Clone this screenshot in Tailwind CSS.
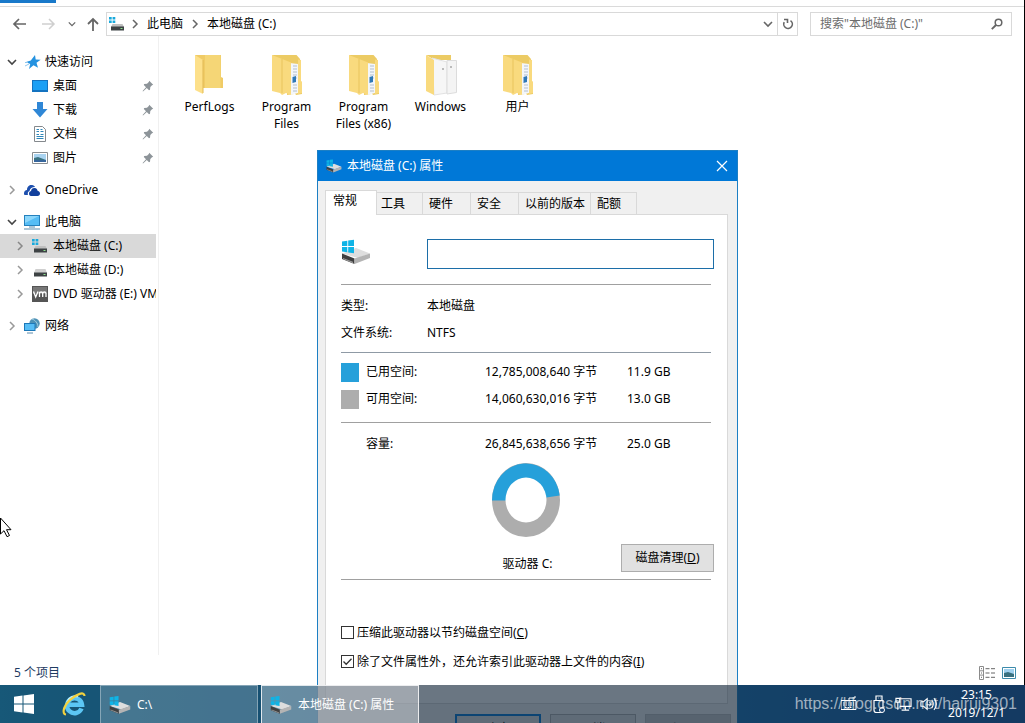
<!DOCTYPE html>
<html lang="zh-CN">
<head>
<meta charset="utf-8">
<title>本地磁盘 (C:)</title>
<script src="https://cdn.jsdelivr.net/npm/@tailwindcss/browser@4"></script>
</head>
<body class="relative flex h-screen flex-col overflow-hidden bg-linear-to-r from-[#20ade3] to-[#165ca8] font-['Noto_Sans','Noto_Sans_CJK_SC',sans-serif] text-[12px] leading-4 text-black">

<svg class="hidden" aria-hidden="true">
  <symbol id="drive" viewBox="0 0 30 26">
    <path d="M1 14.500 15 9l14 5.500-12 4.500z" fill="#dedede"/>
    <path d="M1 14.500 13.500 19.500V25L1 20z" fill="#3f3f3f"/>
    <path d="M13.500 19.500 29 14.500V19l-15.500 6z" fill="#b4b4b4"/>
    <path d="M2 19l10 3.800v1.500L2 20z" fill="#9a9a9a"/>
    <path d="M1 2.500 6.300 1.700V7H1zM7.200 1.500 13 .8V7H7.200zM1 8h5.300v5.300L1 12.600zM7.200 8H13v6.200l-5.800-.8z" fill="#0fb4e6"/>
  </symbol>
  <symbol id="flatdrive" viewBox="0 0 16 16">
    <path d="M3.500 7h10L15 11H2z" fill="#cfcfcf"/>
    <path d="M2 10.500h13v4H2z" fill="#3d4244"/>
    <path d="M11.500 12h2v1h-2z" fill="#8fe38f"/>
  </symbol>
  <symbol id="flatwindrive" viewBox="0 0 16 16">
    <path d="M0 1h2.700v2.500H0zM3.600 1h2.700v2.500H3.600zM0 4.500h2.700V7H0zM3.600 4.500h2.700V7H3.600z" fill="#18a9dc"/>
    <path d="M3.500 8h10L15 11H2z" fill="#bfbfbf"/>
    <path d="M2 10.500h13v4H2z" fill="#3d4244"/>
    <path d="M11.500 12h2v1h-2z" fill="#8fe38f"/>
  </symbol>
  <symbol id="right" viewBox="0 0 8 10"><path d="M2 1l4 4-4 4" fill="none" stroke="currentColor" stroke-width="1.5"/></symbol>
  <symbol id="down" viewBox="0 0 10 8"><path d="M1 2l4 4 4-4" fill="none" stroke="currentColor" stroke-width="1.6"/></symbol>
  <symbol id="pin" viewBox="0 0 12 12"><path d="M7.2.8 11.2 4.8 10 5.2 8.3 7 8 9.8 7 10.2 4.8 8 1 11.4.6 11 4 7.200 1.800 5 2.200 4 5 3.700 6.800 2z" fill="#8d9499"/></symbol>
  <symbol id="folderfull" viewBox="0 0 32 42">
    <path d="M1 1h24.500L29 5v22l2 1v12l-6 1z" fill="#eccb64"/>
    <path d="M16 6 23 8.500V40l-7 1z" fill="#f0cb62"/>
    <path d="M19 9l8 1v29l-8 2z" fill="#f3f6fa"/>
    <path d="M22 12h4M22 15h4M22 18h4M22 21h4M22 24h4M22 31h4M22 34h4M22 37h4" stroke="#b4bfcc" stroke-width="1"/>
    <path d="M21.500 23l3.500-1v6l-3.500 1z" fill="#2f78b7"/>
    <path d="M1 1 20 8.500V41L15 39 11 41 9 39 1 37z" fill="#f9da7e"/>
    <path d="M11 5v34" stroke="#e9c45c" stroke-width="1"/>
    <path d="M27 5.500 30 6v21l1 1v11l-4 1z" fill="#f9da7e"/>
  </symbol>
</svg>

<!-- Explorer window -->
<div class="flex min-h-0 flex-1 flex-col border-r border-black bg-white">
  <div class="h-[7px] border-b border-[#dadada]"><div class="h-[3px] w-14 bg-[#1979ca]"></div></div>

  <header class="flex items-center pt-[5px] pr-3">
    <nav class="flex w-[106px] shrink-0 items-center pl-3 text-[#666]">
      <button aria-label="后退"><svg class="block h-3.5 w-3.5" viewBox="0 0 14 14"><path d="M7 2 2 7l5 5M2 7h12" fill="none" stroke="currentColor" stroke-width="1.7"/></svg></button>
      <button aria-label="前进" class="ml-4 text-[#cfcfcf]"><svg class="block h-3.5 w-3.5" viewBox="0 0 14 14"><path d="M7 2l5 5-5 5M12 7H0" fill="none" stroke="currentColor" stroke-width="1.5"/></svg></button>
      <button aria-label="最近浏览的位置" class="ml-3"><svg class="block h-2 w-2"><use href="#down"/></svg></button>
      <button aria-label="上移" class="ml-2.5"><svg class="block h-3.5 w-3.5" viewBox="0 0 14 14"><path d="M2 7l5-5 5 5M7 2v12" fill="none" stroke="currentColor" stroke-width="1.8"/></svg></button>
    </nav>
    <div class="flex h-6 min-w-0 flex-1 items-center border border-[#d9d9d9]">
      <svg class="mr-1 ml-0.5 h-4 w-4"><use href="#flatwindrive"/></svg>
      <svg class="mx-0.5 h-2.5 w-2 text-[#666]"><use href="#right"/></svg>
      <button class="mr-1.5 ml-1.5">此电脑</button>
      <svg class="mx-0.5 h-2.5 w-2 text-[#666]"><use href="#right"/></svg>
      <button class="ml-1.5">本地磁盘 (C:)</button>
      <button aria-label="以前的位置" class="ml-auto px-1 text-[#666]"><svg class="h-2.5 w-2.5"><use href="#down"/></svg></button>
      <button aria-label="刷新" class="flex h-full w-5 items-center justify-center border-l border-[#d9d9d9] text-[#666]"><svg class="h-3 w-3" viewBox="0 0 12 12"><path d="M2.200 4.200A4.300 4.300 0 1 0 8.500 2.600M2 1.500h3.500V5" fill="none" stroke="currentColor" stroke-width="1.600"/></svg></button>
    </div>
    <label class="ml-3 flex h-6 w-[202px] shrink-0 items-center border border-[#d9d9d9] pr-2 pl-[9px]">
      <input type="text" aria-label="搜索" placeholder='搜索"本地磁盘 (C:)"' class="min-w-0 flex-1 outline-none placeholder:text-[#6d6d6d]">
      <svg class="h-3 w-3 text-[#666]" viewBox="0 0 12 12"><circle cx="7.500" cy="4.500" r="3.300" fill="none" stroke="currentColor" stroke-width="1.500"/><path d="M5 7 .800 11.200" stroke="currentColor" stroke-width="1.900"/></svg>
    </label>
  </header>

  <div class="flex min-h-0 flex-1">
    <aside class="w-[159px] shrink-0 overflow-hidden border-r border-[#f0f0f0] pt-3.5 pr-0.5 whitespace-nowrap">
      <div class="flex h-6 items-center pl-[7px]"><svg class="mr-2 h-2.5 w-2.5 text-[#444]"><use href="#down"/></svg>
        <svg class="mr-1 h-4 w-4" viewBox="0 0 16 16"><path d="M10 1l.7 4.500 5 .300-4.200 3 1.500 5-4.500-2.600L4 15l1.200-5L1 8l4.800-1.500z" fill="#2492e0"/><path d="M0 12l4-2M0 8.500h3" stroke="#8fc6ee"/></svg><a href="#">快速访问</a></div>
      <div class="flex h-6 items-center pr-0.5 pl-8"><svg class="mr-[5px] h-4 w-4" viewBox="0 0 16 16"><path d="M0 2h16v12H0z" fill="#1473c0"/><path d="M1 3h14v9H1z" fill="#1ba0f5"/></svg><a href="#">桌面</a><svg class="ml-auto h-3 w-3"><use href="#pin"/></svg></div>
      <div class="flex h-6 items-center pr-0.5 pl-8"><svg class="mr-[5px] h-4 w-4" viewBox="0 0 16 16"><path d="M5 0h6v7h4.500L8 15.500.500 7H5z" fill="#2f87d6"/></svg><a href="#">下载</a><svg class="ml-auto h-3 w-3"><use href="#pin"/></svg></div>
      <div class="flex h-6 items-center pr-0.5 pl-8"><svg class="mr-[5px] h-4 w-4" viewBox="0 0 16 16"><path d="M2.500.500h8l3 3v12h-11z" fill="#fff" stroke="#84898d"/><path d="M4.500 3.500H7M8.500 3.500h2M4.500 5.500H7M8.500 5.500h3M4.500 8.500H7M8.500 8.500h3M4.500 10.500h7M4.500 12.500h7" stroke="#3087b9"/></svg><a href="#">文档</a><svg class="ml-auto h-3 w-3"><use href="#pin"/></svg></div>
      <div class="flex h-6 items-center pr-0.5 pl-8"><svg class="mr-[5px] h-4 w-4" viewBox="0 0 16 16"><path d="M.500 2.500h15v11H.500z" fill="#fff" stroke="#898d90"/><path d="M2 4h12v8H2z" fill="#a9d3f0"/><path d="M2 8l4-1 8 3v2H2z" fill="#3a7280"/><path d="M2 10h12v2H2z" fill="#36669c"/></svg><a href="#">图片</a><svg class="ml-auto h-3 w-3"><use href="#pin"/></svg></div>

      <div class="mt-2 flex h-6 items-center pl-2"><svg class="mr-2 h-2.5 w-2 text-[#999]"><use href="#right"/></svg>
        <svg class="mr-[5px] h-4 w-4" viewBox="0 0 16 16"><path d="M0 12c-.200-3 1.500-4 3-4C3 4 6 2.500 8 3c1.500.300 2.500 1 3 2-3 0-5 1.500-5.500 4C3.800 9.500 3.500 11.500 4 13H2C1 13 0 13 0 12z" fill="#1d4fae"/><path d="M5 11.500C5 9.800 6 9.300 7 9.300 7 7 9 5.800 10.500 6c2 0 3 1.500 3.200 3C15.500 9.300 16 10.300 16 11.500S15 14 13.500 14H7c-1.300 0-2-1.200-2-2.500z" fill="#12409d"/></svg><a href="#">OneDrive</a></div>

      <div class="mt-2 flex h-6 items-center pl-[7px]"><svg class="mr-[7px] h-2.5 w-2.5 text-[#444]"><use href="#down"/></svg>
        <svg class="mr-[5px] h-4 w-4" viewBox="0 0 16 16"><path d="M0 1h16v11H0z" fill="#2581bd"/><path d="M1 2h14v9H1z" fill="#56bdf5"/><path d="M1 2h14L1 9z" fill="#8ad6fb"/><path d="M5 13h6M0 15h16" stroke="#5a8cad"/></svg><a href="#">此电脑</a></div>
      <div class="flex h-6 items-center bg-[#d9d9d9] pl-4"><svg class="mr-2 h-2.5 w-2 text-[#888]"><use href="#right"/></svg><svg class="mr-[5px] h-4 w-4"><use href="#flatwindrive"/></svg><a href="#">本地磁盘 (C:)</a></div>
      <div class="flex h-6 items-center pl-4"><svg class="mr-2 h-2.5 w-2 text-[#999]"><use href="#right"/></svg><svg class="mr-[5px] h-4 w-4"><use href="#flatdrive"/></svg><a href="#">本地磁盘 (D:)</a></div>
      <div class="flex h-6 items-center overflow-hidden pl-4"><svg class="mr-2 h-2.5 w-2 shrink-0 text-[#999]"><use href="#right"/></svg>
        <svg class="mr-[5px] h-4 w-4 shrink-0" viewBox="0 0 16 16"><path d="M0 0h16v16H0z" fill="#555"/><path d="M1 1h14v7H1z" fill="#777"/><path d="M1.500 5.500 3.700 11 6 5.500M7.500 11V5.800M7.500 7.500c0-2 3.200-2 3.200 0V11M10.700 7.500c0-2 3.300-2 3.300 0V11" fill="none" stroke="#fff" stroke-width="1.300"/></svg><a href="#">DVD 驱动器 (E:) VMware Tools</a></div>

      <div class="mt-2 flex h-6 items-center pl-2"><svg class="mr-2 h-2.5 w-2 text-[#999]"><use href="#right"/></svg>
        <svg class="mr-[5px] h-4 w-4" viewBox="0 0 16 16"><circle cx="10.500" cy="5.500" r="5.200" fill="#4d91b5"/><path d="M8 1c3 1 6 4 6 8" fill="none" stroke="#a3cfe2"/><path d="M0 5h11.500v8H0z" fill="#1c78b8"/><path d="M1 6h9.500v6H1z" fill="#56bdf5"/><path d="M3 15h6" stroke="#5a8cad"/></svg><a href="#">网络</a></div>
    </aside>

    <main class="flex flex-1 items-start pt-[18px] pl-3 text-center leading-[17px]">
      <a href="#" class="flex w-[77px] flex-col items-center"><svg class="mb-0.5 h-[42px] w-8" viewBox="0 0 32 42"><path d="M1 1h26v22l2 1v10H8z" fill="#f0cb66"/><path d="M11 1h15.500v33H11z" fill="#f5d676"/><path d="M1 1 9 6v34L1 36z" fill="#fde08a"/><path d="M9 6v33" stroke="#e0b952"/></svg>PerfLogs</a>
      <a href="#" class="flex w-[77px] flex-col items-center"><svg class="mb-0.5 h-[42px] w-8"><use href="#folderfull"/></svg><span>Program<br>Files</span></a>
      <a href="#" class="flex w-[77px] flex-col items-center"><svg class="mb-0.5 h-[42px] w-8"><use href="#folderfull"/></svg><span>Program<br>Files (x86)</span></a>
      <a href="#" class="flex w-[77px] flex-col items-center"><svg class="mb-0.5 h-[42px] w-8" viewBox="0 0 32 42"><path d="M1 1h25v5H10z" fill="#eccb64"/><path d="M7 4l15 4v31l-13 2z" fill="#f6f6f6" stroke="#e2e2e2"/><path d="M22 6.500h9.500v32L22 40z" fill="#f4f4f4" stroke="#dcdcdc"/><path d="M17 14h2v2h-2zM25 12h2v2h-2z" fill="#bbb"/><path d="M1 1 9 6v35L1 37z" fill="#f9da7e"/></svg>Windows</a>
      <a href="#" class="flex w-[77px] flex-col items-center"><svg class="mb-0.5 h-[42px] w-8"><use href="#folderfull"/></svg>用户</a>
    </main>
  </div>

  <footer class="flex h-[30px] items-center pt-1.5 pr-2 pl-3.5 text-[#1e3b62]">
    <span>5 个项目</span>
    <button aria-label="详细信息" class="ml-auto"><svg class="block h-3.5 w-4" viewBox="0 0 16 14"><path d="M.500.500h4v13h-4zM.500 4.800h4M.500 9.100h4" fill="none" stroke="#8b8b8b"/><path d="M2 2.700h1M2 7h1M2 11.300h1M6.500 2.700h4M12 2.700h4M6.500 7h4M12 7h4M6.500 11.300h4M12 11.300h4" stroke="#666"/></svg></button>
    <button aria-label="大图标" class="ml-[7px]"><svg class="block h-3.5 w-3.5" viewBox="0 0 14 14"><path d="M.500 1.500h13v11H.500z" fill="#fff" stroke="#3d8bab"/><path d="M2 3h10v8H2z" fill="#9fd0ee"/><path d="M2 7l4-1 6 2v3H2z" fill="#39707f"/></svg></button>
  </footer>
</div>

<!-- Properties dialog, partly behind the taskbar -->
<section role="dialog" aria-label="本地磁盘 (C:) 属性" class="absolute top-[150px] left-[317px] z-10 w-[421px] border border-[#1c7fc4] bg-[#f0f0f0] pb-3">
  <div class="flex h-[30px] items-center bg-[#0078d7] pr-2 pl-2 text-white">
    <svg class="mr-[5px] h-4 w-4"><use href="#drive"/></svg>
    <h1>本地磁盘 (C:) 属性</h1>
    <button aria-label="关闭" class="ml-auto"><svg class="block h-3.5 w-3.5" viewBox="0 0 14 14"><path d="M2 2l10 10M12 2 2 12" stroke="#fff" stroke-width="1.200"/></svg></button>
  </div>

  <div class="mr-[9px] ml-[7px] pt-[9px]">
    <div role="tablist" class="flex items-end">
      <button role="tab" aria-selected="true" class="-mb-px h-[25px] w-[52px] border border-b-0 border-[#d9d9d9] bg-white pb-1 pl-[7px] text-left">常规</button>
      <button role="tab" class="h-[22px] w-[46px] border-t border-r border-[#d9d9d9] pl-1 text-left">工具</button>
      <button role="tab" class="h-[22px] w-12 border-t border-r border-[#d9d9d9] pl-1.5 text-left">硬件</button>
      <button role="tab" class="h-[22px] w-12 border-t border-r border-[#d9d9d9] pl-1.5 text-left">安全</button>
      <button role="tab" class="h-[22px] w-[72px] border-t border-r border-[#d9d9d9] pl-1.5 text-left">以前的版本</button>
      <button role="tab" class="h-[22px] w-[46px] border-t border-r border-[#d9d9d9] pl-1.5 text-left">配额</button>
    </div>

    <div role="tabpanel" class="border border-[#d9d9d9] bg-white pt-6 pr-[13px] pb-[27px] pl-[15px]">
      <div class="flex items-center">
        <svg class="mr-14 mb-1 h-[26px] w-[30px] shrink-0"><use href="#drive"/></svg>
        <input type="text" aria-label="卷标" class="h-[30px] min-w-0 flex-1 border border-[#1c6ea8] bg-white px-1 outline-none">
      </div>
      <hr class="mt-[15px] mr-[3px] border-[#a0a0a0]">
      <dl class="mt-[7px] grid grid-cols-[86px_1fr] leading-[27px]">
        <dt>类型:</dt><dd>本地磁盘</dd>
        <dt>文件系统:</dt><dd>NTFS</dd>
      </dl>
      <hr class="mt-1.5 mr-[3px] border-[#8f9aa5]">
      <table class="mt-[5px] w-full table-fixed text-left leading-[27px]">
        <tr><th class="w-[144px] font-normal"><span class="mr-[7px] inline-block h-[19px] w-[18px] bg-[#26a0da] align-middle"></span>已用空间:</th><td class="w-[142px]">12,785,008,640 字节</td><td>11.9 GB</td></tr>
        <tr><th class="font-normal"><span class="mr-[7px] inline-block h-[19px] w-[18px] bg-[#adadad] align-middle"></span>可用空间:</th><td>14,060,630,016 字节</td><td>13.0 GB</td></tr>
      </table>
      <hr class="mt-2.5 mr-[3px] border-[#a0a0a0]">
      <table class="mt-[7px] w-full table-fixed text-left leading-[27px]">
        <tr><th class="w-[144px] pl-[25px] font-normal">容量:</th><td class="w-[142px]">26,845,638,656 字节</td><td>25.0 GB</td></tr>
      </table>
      <div class="mt-1.5 mr-[3px] flex justify-center">
        <svg class="h-[74px] w-[68px]" viewBox="0 0 68 74" role="img" aria-label="已用 48%">
          <ellipse cx="34" cy="37" rx="34" ry="37" fill="#adadad"/>
          <path d="M0 37.500A34 37 0 0 1 67.700 32.500L34 37.500z" fill="#26a0da"/>
          <ellipse cx="34" cy="37" rx="20.500" ry="22.500" fill="#fff"/>
        </svg>
      </div>
      <div class="mt-[7px] grid grid-cols-[1fr_auto_1fr] items-end">
        <span class="col-start-2">驱动器 C:</span>
        <button class="h-7 w-[93px] justify-self-end border border-[#adadad] bg-[#e1e1e1]">磁盘清理(<u>D</u>)</button>
      </div>
      <hr class="mt-[7px] mr-[3px] border-[#a0a0a0]">
      <div class="mt-[38px]">
        <label class="flex h-[29px] items-center"><input type="checkbox" class="mr-[3px] h-[13px] w-[13px] appearance-none border border-[#333] bg-white">压缩此驱动器以节约磁盘空间(<u>C</u>)</label>
        <label class="relative flex h-[29px] items-center"><input type="checkbox" checked class="peer mr-[3px] h-[13px] w-[13px] appearance-none border border-[#333] bg-white"><svg class="pointer-events-none absolute top-2 left-0 hidden h-[13px] w-[13px] peer-checked:block" viewBox="0 0 13 13"><path d="M2.500 6.500 5.200 9.300 10.500 3.800" fill="none" stroke="#333" stroke-width="1.300"/></svg>除了文件属性外，还允许索引此驱动器上文件的内容(<u>I</u>)</label>
      </div>
    </div>
  </div>
  <div class="mt-2.5 flex justify-end gap-[9px] pr-1.5">
    <button class="h-[29px] w-[86px] border-2 border-[#0078d7] bg-[#e1e1e1]">确定</button>
    <button class="h-[29px] w-[86px] border border-[#adadad] bg-[#e1e1e1]">取消</button>
    <button disabled class="h-[29px] w-[86px] border border-[#bfbfbf] bg-[#cccccc] text-[#838383]">应用(<u>A</u>)</button>
  </div>
</section>

<!-- Taskbar -->
<div class="relative z-20 flex h-[38px] shrink-0 items-center bg-[#132639]/63 text-white">
  <button aria-label="开始" class="flex w-12 justify-center"><svg class="h-5 w-5" viewBox="0 0 20 20"><path d="M0 2.800 8.500 1.600V9.500H0zM9.500 1.500 20 0v9.500H9.500zM0 10.500h8.500v8L0 17.300zM9.500 10.500H20V20L9.500 18.600z" fill="#fff"/></svg></button>
  <button aria-label="Internet Explorer" class="mr-px flex w-[51px] justify-center"><svg class="h-6 w-6" viewBox="0 0 24 24"><path d="M19.500 16.500A7.500 7.500 0 1 1 20 12.800H7" fill="none" stroke="#5cc6f4" stroke-width="4.500"/><path d="M5 10C7 5 12 3.500 16 4.500" fill="none" stroke="#b9ecfb" stroke-width="2"/><path d="M4 22.500C-.500 22 1.500 14 8 8S22.500-1 22.500 4" fill="none" stroke="#f3d23e" stroke-width="2.200"/></svg></button>
  <button class="mr-[3px] flex h-full w-[158px] items-center border border-b-0 border-white/35 bg-white/20 pl-2"><svg class="mr-1.5 h-5 w-[22px]"><use href="#drive"/></svg>C:\</button>
  <button class="flex h-full w-[158px] items-center border border-b-0 border-white/80 bg-white/35 pl-2"><svg class="mr-1.5 h-5 w-[22px]"><use href="#drive"/></svg>本地磁盘 (C:) 属性</button>
  <div class="ml-auto flex items-center pr-5">
    <svg class="mr-4 h-4 w-4" viewBox="0 0 16 16"><path d="M0 4.500h15v9H0zM8 4.500V2h6V0" fill="none" stroke="#fff"/><path d="M2 7h11M2 9h11M4 11.500h7" stroke="#fff" stroke-dasharray="1.500 1"/></svg>
    <svg class="mr-2.5 h-5 w-3" viewBox="0 0 12 20"><path d="M3 6.500V2h6v4.500M1 6.500h9V16c0 2-1 2.500-2.500 2.500h-4C2 18.500 1 18 1 16zM5 4h.500M7 4h.500" fill="none" stroke="#fff" stroke-width="1.200"/><circle cx="9" cy="16" r="2.500" fill="#174273" stroke="#fff"/></svg>
    <svg class="mr-2 h-4 w-[17px]" viewBox="0 0 18 16"><path d="M5 2.500h12v8H5M11 10.500V14M7 14.500h8M1 2h4v4H1zM3 6v8" fill="none" stroke="#fff" stroke-width="1.200"/></svg>
    <svg class="mr-2.5 h-4 w-[18px]" viewBox="0 0 20 16"><path d="M1 5.500h3l4-3.500v12L4 10.500H1zM10.500 5.500c1.200 1.500 1.200 3.500 0 5M13 3.500c2.200 2.800 2.200 6.200 0 9M15.500 1.500c3.300 4 3.300 9 0 13" fill="none" stroke="#fff" stroke-width="1.200"/></svg>
    <div class="text-center leading-[18px]">23:15<br>2019/12/1</div>
  </div>
</div>

<div class="pointer-events-none absolute right-2 bottom-[9px] z-30 font-['Liberation_Sans',sans-serif] text-[16px] leading-5 text-white/60">https://blog.csdn.net/hairui9301</div>

<!-- Mouse pointer -->
<svg class="pointer-events-none absolute top-[517px] left-0 z-30 h-[21px] w-3" viewBox="0 0 12 21" aria-hidden="true"><path d="M.500 1v16l3.500-3.300 3 6 2.500-1.200-3-5.800H11z" fill="#fff" stroke="#000"/></svg>
</body>
</html>
